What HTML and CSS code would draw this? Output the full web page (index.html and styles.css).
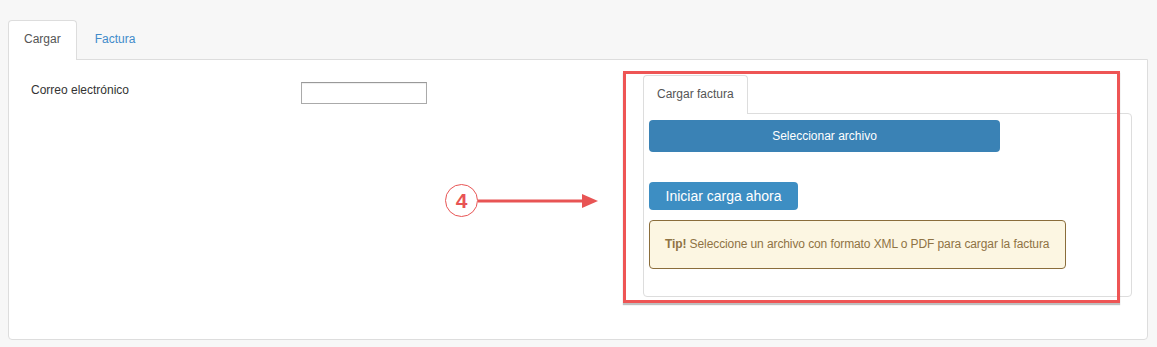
FILE: index.html
```html
<!DOCTYPE html>
<html lang="es">
<head>
  <meta charset="UTF-8" />
  <title>Cargar factura</title>
  <link rel="stylesheet" href="styles.css">
</head>
<body>

  <div class="page">
    <ul class="tabs">
      <li class="tab active"><a href="#cargar">Cargar</a></li>
      <li class="tab"><a href="#factura">Factura</a></li>
    </ul>

    <div class="panel">
      <div class="left-col">
        <div class="form-row">
          <label for="email">Correo electrónico</label>
          <input type="text" id="email" />
        </div>
      </div>

      <div class="right-col">
        <!-- annotation overlay -->
        <div class="highlight"></div>
        <div class="pointer">
          <span class="step">4</span>
          <svg class="arrow" width="120" height="16" viewBox="0 0 120 16">
            <line x1="0" y1="8" x2="106" y2="8" stroke="#e85454" stroke-width="3" />
            <polygon points="104,1 120,8 104,15" fill="#e85454" />
          </svg>
        </div>

        <ul class="tabs inner-tabs">
          <li class="tab active"><a href="#subir">Cargar factura</a></li>
        </ul>
        <div class="upload-box">
          <button class="btn btn-select">Seleccionar archivo</button>
          <button class="btn btn-start">Iniciar carga ahora</button>
          <div class="tip">
            <strong>Tip!</strong> Seleccione un archivo con formato XML o PDF para cargar la factura
          </div>
        </div>
      </div>
    </div>
  </div>

</body>
</html>
```

FILE: styles.css
```css
* {
  margin: 0;
  padding: 0;
  box-sizing: border-box;
}

body {
  background: #f7f7f7;
  color: #333;
  font-family: "Liberation Sans", Arial, sans-serif;
  font-size: 12px;
}

.page {
  padding: 20px 9px 0 8px;
}

/* Tabs */
.tabs {
  list-style: none;
  display: flex;
  gap: 2px;
}

.tab a {
  display: block;
  padding: 10px 15px 11px 15px;
  line-height: 17px;
  color: #428bca;
  text-decoration: none;
  border: 1px solid transparent;
  border-bottom: none;
  border-radius: 4px 4px 0 0;
}

.tab.active a {
  color: #555;
  background: #fff;
  border-color: #ddd;
  margin-bottom: -1px;
  padding-bottom: 12px;
}

/* Main panel */
.panel {
  display: flex;
  background: #fff;
  border: 1px solid #ddd;
  border-radius: 0 0 4px 4px;
  height: 281px;
  padding: 15px 15px 0 22px;
}

.left-col {
  flex: 1;
  padding-top: 7px;
}

.form-row {
  display: flex;
  align-items: flex-start;
}

.form-row label {
  width: 270px;
  padding-top: 1px;
  line-height: 14px;
}

.form-row input {
  width: 126px;
  height: 22px;
  border: 1px solid #aaa;
  border-top-color: #999;
  box-shadow: inset 0 1px 1px #eee;
}

/* Right column with upload widget */
.right-col {
  position: relative;
  width: 489px;
}

.inner-tabs .tab.active a {
  padding: 10px 13px 11px 13px;
  color: #555;
}

.upload-box {
  border: 1px solid #ddd;
  border-radius: 0 4px 4px 4px;
  height: 184px;
  padding: 6px 5px;
  display: flex;
  flex-direction: column;
  align-items: flex-start;
}

.btn {
  border: none;
  border-radius: 4px;
  color: #fff;
  font-family: inherit;
  cursor: pointer;
}

.btn-select {
  width: 351px;
  height: 32px;
  font-size: 12px;
  background: #3a82b5;
}

.btn-start {
  margin-top: 30px;
  width: 149px;
  height: 28px;
  font-size: 14px;
  background: #3d8ec3;
}

.tip {
  margin-top: 10px;
  width: 417px;
  height: 49px;
  padding: 16px 10px 16px 15px;
  background: #fcf6e2;
  border: 1px solid #8a6d3b;
  border-radius: 4px;
  color: #8f7344;
  line-height: 15px;
  white-space: nowrap;
  letter-spacing: -0.1px;
}

/* Annotation */
.highlight {
  position: absolute;
  left: -20px;
  top: -4px;
  width: 497px;
  height: 232px;
  border: 3.5px solid #ee5555;
  box-shadow: 0 2px 1px rgba(0, 0, 0, 0.25);
  pointer-events: none;
}

.pointer {
  position: absolute;
  left: -198px;
  top: 109px;
  display: flex;
  align-items: center;
}

.step {
  width: 33px;
  height: 33px;
  border: 1px solid #e85454;
  border-radius: 50%;
  color: #e85454;
  font-size: 21px;
  font-weight: bold;
  display: flex;
  align-items: center;
  justify-content: center;
}

.arrow {
  display: block;
  margin-top: 1px;
}
```
